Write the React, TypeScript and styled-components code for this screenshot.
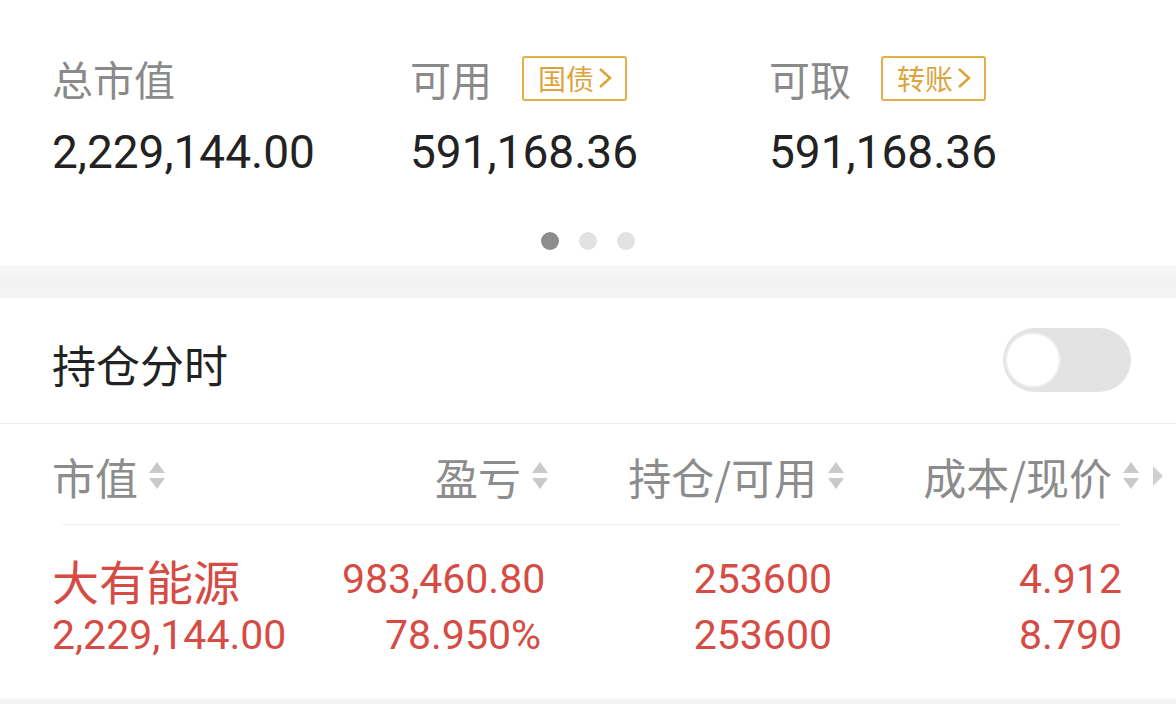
import React from 'react';
import styled, { createGlobalStyle } from 'styled-components';

const GlobalStyle = createGlobalStyle`
  html, body {
    margin: 0;
    padding: 0;
    background: #fff;
  }
  body {
    font-family: Roboto, "Noto Sans CJK SC", sans-serif;
  }
`;

type Summary = {
  label: string;
  value: string;
  action?: string;
};

const summaries: Summary[] = [
  { label: '总市值', value: '2,229,144.00' },
  { label: '可用', value: '591,168.36', action: '国债' },
  { label: '可取', value: '591,168.36', action: '转账' },
];

const columns = [
  { title: '市值', align: 'left' },
  { title: '盈亏', align: 'right' },
  { title: '持仓/可用', align: 'right' },
  { title: '成本/现价', align: 'right' },
] as const;

const holding = {
  name: '大有能源',
  marketValue: '2,229,144.00',
  profit: '983,460.80',
  profitRate: '78.950%',
  position: '253600',
  available: '253600',
  cost: '4.912',
  price: '8.790',
};

const Page = styled.div`
  width: 1176px;
  height: 704px;
  overflow: hidden;
  background: #fff;
`;

const TopPanel = styled.div`
  padding: 56px 0 15px 52px;
`;

const SummaryGrid = styled.div`
  display: grid;
  grid-template-columns: 358px 359px 1fr;
`;

const SummaryCell = styled.div`
  display: flex;
  flex-direction: column;
  gap: 22px;
`;

const LabelRow = styled.div`
  display: flex;
  align-items: center;
  gap: 30px;
  height: 48px;
`;

const Label = styled.span`
  font-family: "Noto Sans CJK SC", sans-serif;
  font-size: 41px;
  color: #8a8a8a;
  line-height: 48px;
  margin-top: -4px;
`;

const Badge = styled.span`
  display: inline-flex;
  align-items: center;
  gap: 3px;
  box-sizing: border-box;
  height: 45px;
  padding: 0 12px 0 14px;
  border: 2px solid #e2b04a;
  border-radius: 3px;
  font-family: "Noto Sans CJK SC", sans-serif;
  font-size: 28px;
  color: #dba43c;
  margin-top: -4px;
`;

const Value = styled.span`
  font-family: Roboto, sans-serif;
  font-size: 46px;
  line-height: 52px;
  color: #222;
`;

const Dots = styled.div`
  display: flex;
  justify-content: center;
  gap: 20px;
  margin: 54px 52px 0 0;
`;

const Dot = styled.span<{ $active?: boolean }>`
  width: 18px;
  height: 18px;
  border-radius: 50%;
  background: ${(p) => (p.$active ? '#8d8d8d' : '#e2e2e2')};
`;

const Band = styled.div<{ $height: number }>`
  height: ${(p) => p.$height}px;
  background: linear-gradient(#f8f8f8, #f2f2f2 40%, #f4f4f4);
`;

const SwitchRow = styled.div`
  display: flex;
  align-items: center;
  justify-content: space-between;
  height: 125px;
  padding: 0 45px 0 52px;
  border-bottom: 1px solid #eeeeee;
`;

const SectionTitle = styled.span`
  font-family: "Noto Sans CJK SC", sans-serif;
  font-size: 44px;
  color: #222;
  margin-top: 6px;
`;

const Track = styled.div`
  width: 128px;
  height: 64px;
  border-radius: 32px;
  background: #e3e3e3;
  display: flex;
  align-items: center;
  padding-left: 2px;
  box-sizing: border-box;
  margin-top: -2px;
`;

const Knob = styled.div`
  width: 56px;
  height: 56px;
  border-radius: 50%;
  background: #fff;
  border: 2px solid #ececec;
  box-sizing: border-box;
`;

const Table = styled.div`
  padding-bottom: 35px;
`;

const TableHead = styled.div`
  display: grid;
  grid-template-columns: 290px 207px 296px 295px 1fr;
  align-items: center;
  height: 100px;
  padding-left: 52px;
`;

const HeadCell = styled.div<{ $align: 'left' | 'right' }>`
  display: flex;
  align-items: center;
  justify-content: ${(p) => (p.$align === 'left' ? 'flex-start' : 'flex-end')};
  gap: 10px;
  font-family: "Noto Sans CJK SC", sans-serif;
  font-size: 43px;
  color: #8c8c8c;
  margin-top: 4px;
`;

const MoreCell = styled.div`
  display: flex;
  align-items: center;
  padding-left: 12px;
  margin-top: 4px;
`;

const Divider = styled.div`
  height: 1px;
  background: #efefef;
  margin: 0 56px 0 62px;
`;

const Body = styled.div`
  display: grid;
  grid-template-columns: 290px 199px 291px 290px;
  grid-auto-rows: 56px;
  align-items: center;
  padding: 26px 0 0 52px;
`;

const Cell = styled.div<{ $align?: 'left' | 'right'; $cjk?: boolean }>`
  text-align: ${(p) => p.$align ?? 'right'};
  font-family: ${(p) => (p.$cjk ? '"Noto Sans CJK SC", sans-serif' : 'Roboto, sans-serif')};
  font-size: ${(p) => (p.$cjk ? 47 : 41)}px;
  color: #d64b43;
  white-space: nowrap;
`;

const Chevron = () => (
  <svg width="16" height="26" viewBox="0 0 16 26">
    <polyline points="3,4 13,13 3,22" fill="none" stroke="#dba43c" strokeWidth="2.6" />
  </svg>
);

const SortIcon = () => (
  <svg width="18" height="32" viewBox="0 0 18 32">
    <polygon points="9,2 17,13 1,13" fill="#c9c9c9" />
    <polygon points="1,18 17,18 9,29" fill="#c9c9c9" />
  </svg>
);

const RightArrow = () => (
  <svg width="12" height="24" viewBox="0 0 12 24">
    <polygon points="1,2 11,12 1,22" fill="#cfcfcf" />
  </svg>
);

export default function App() {
  return (
    <Page>
      <GlobalStyle />
      <TopPanel>
        <SummaryGrid>
          {summaries.map((s) => (
            <SummaryCell key={s.label}>
              <LabelRow>
                <Label>{s.label}</Label>
                {s.action && (
                  <Badge>
                    {s.action}
                    <Chevron />
                  </Badge>
                )}
              </LabelRow>
              <Value>{s.value}</Value>
            </SummaryCell>
          ))}
        </SummaryGrid>
        <Dots>
          <Dot $active />
          <Dot />
          <Dot />
        </Dots>
      </TopPanel>
      <Band $height={33} />
      <SwitchRow>
        <SectionTitle>持仓分时</SectionTitle>
        <Track>
          <Knob />
        </Track>
      </SwitchRow>
      <Table>
        <TableHead>
          {columns.map((c) => (
            <HeadCell key={c.title} $align={c.align}>
              {c.title}
              <SortIcon />
            </HeadCell>
          ))}
          <MoreCell>
            <RightArrow />
          </MoreCell>
        </TableHead>
        <Divider />
        <Body>
          <Cell $align="left" $cjk>{holding.name}</Cell>
          <Cell>{holding.profit}</Cell>
          <Cell>{holding.position}</Cell>
          <Cell>{holding.cost}</Cell>
          <Cell $align="left">{holding.marketValue}</Cell>
          <Cell>{holding.profitRate}</Cell>
          <Cell>{holding.available}</Cell>
          <Cell>{holding.price}</Cell>
        </Body>
      </Table>
      <Band $height={10} />
    </Page>
  );
}
